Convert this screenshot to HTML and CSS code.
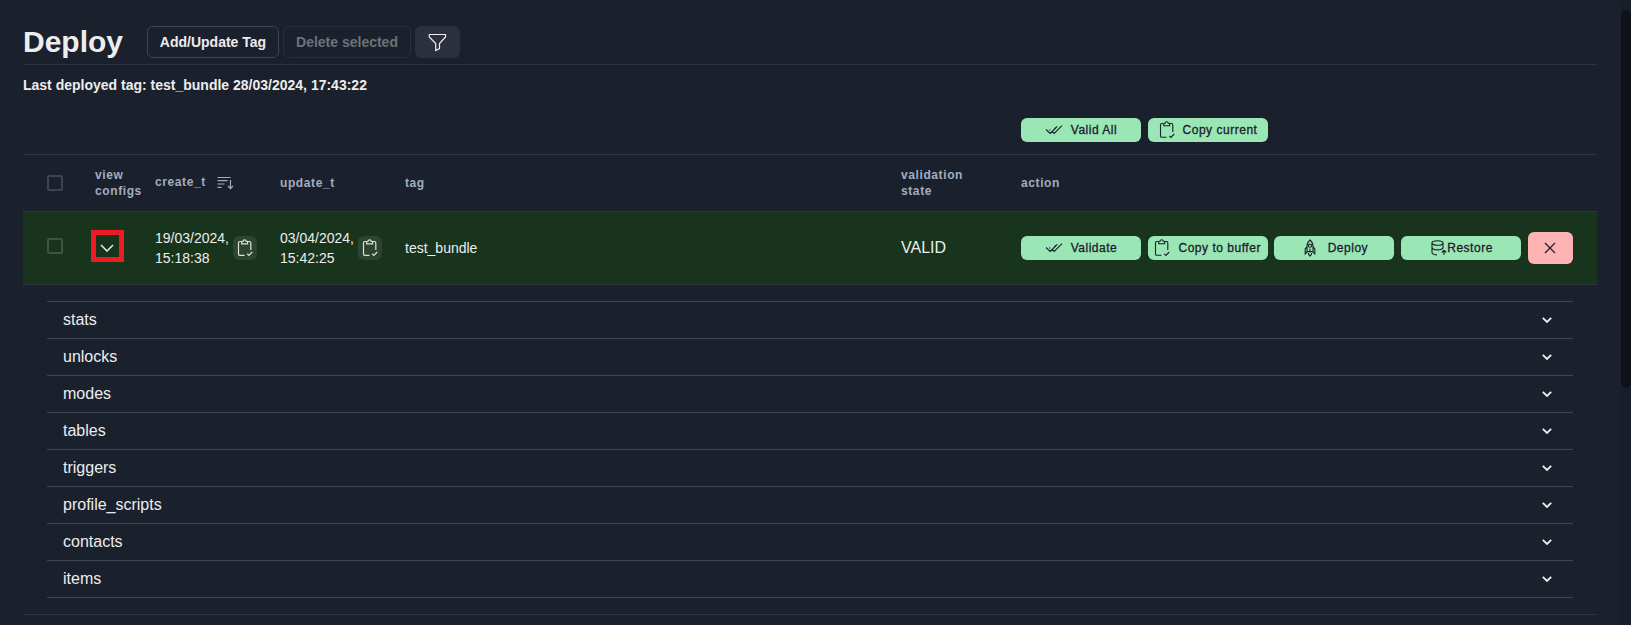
FILE: index.html
```
<!DOCTYPE html>
<html lang="en">
<head>
<meta charset="utf-8">
<title>Deploy</title>
<link rel="stylesheet" href="styles.css">
</head>
<body>
<svg class="defs" aria-hidden="true">
  <symbol id="clip" viewBox="0 0 16 18"><path d="M4 2.5H2.8Q1.5 2.5 1.5 3.8V15Q1.5 16.3 2.8 16.3H7.5M11 2.5h1.5Q13.8 2.5 13.8 3.8V11M4.7 4.8V2.8Q4.7 2.3 5.3 2.3H6Q6.2.8 7.6.8T9.3 2.3H10Q10.6 2.3 10.6 2.8V4.8ZM10.2 14.8l1.7 1.6 3.3-3.4"/></symbol>
  <symbol id="checks" viewBox="0 0 18 12"><path d="M1 5.5l4.2 4L8 6.8M4.5 5.5l.8.8M9.2 5l1.6-1.6M7.2 7.3l2 2.2L17 1.7M5.2 9.5L12.3 2.3"/></symbol>
  <symbol id="down" viewBox="0 0 14 8"><path d="M1 1l6 6 6-6"/></symbol>
</svg>
<div class="app">
  <main class="page">
    <header class="head">
      <h1 class="title">Deploy</h1>
      <button class="btn add">Add/Update Tag</button>
      <button class="btn del" disabled>Delete selected</button>
      <button class="btn filter"><svg width="19" height="19" viewBox="0 0 19 19"><path d="M1.3 1.5h16.2v2.4l-6 6.6v5.1l-3.8 2V10.5l-6.4-6.6z"/></svg></button>
    </header>
    <p class="last">Last deployed tag: test_bundle 28/03/2024, 17:43:22</p>
    <div class="bulk">
      <button class="act"><svg class="ck" width="18" height="12"><use href="#checks"/></svg><span class="gap">Valid All</span></button>
      <button class="act"><svg class="cl" width="16" height="18"><use href="#clip"/></svg><span class="gap">Copy current</span></button>
    </div>
    <section class="table">
      <div class="row thead">
        <div class="c-check"><span class="box"></span></div>
        <div class="c-view">view configs</div>
        <div class="c-date sorted"><span class="label">create_t</span><svg width="17" height="14" viewBox="0 0 17 14"><path d="M.5 1.5h13M.5 4.7h10M.5 8h7M.5 11.3h4M13.5 4v8.5M11 10l2.5 2.7 2.5-2.7"/></svg></div>
        <div class="c-date">update_t</div>
        <div class="c-tag">tag</div>
        <div class="c-state">validation<br>state</div>
        <div class="c-act">action</div>
      </div>
      <div class="row valid">
        <div class="c-check"><span class="box"></span></div>
        <div class="c-view"><span class="mark"><svg width="14" height="8"><use href="#down"/></svg></span></div>
        <div class="c-date"><span class="date">19/03/2024, 15:18:38</span><button class="copy"><svg width="16" height="18"><use href="#clip"/></svg></button></div>
        <div class="c-date"><span class="date">03/04/2024, 15:42:25</span><button class="copy"><svg width="16" height="18"><use href="#clip"/></svg></button></div>
        <div class="c-tag">test_bundle</div>
        <div class="c-state">VALID</div>
        <div class="c-act">
          <button class="act"><svg class="ck" width="18" height="12"><use href="#checks"/></svg><span class="gap">Validate</span></button>
          <button class="act"><svg class="cl" width="16" height="18"><use href="#clip"/></svg><span class="gap">Copy to buffer</span></button>
          <button class="act launch"><svg class="rk" width="12" height="18" viewBox="0 0 12 18"><path d="M6 1Q3 3.4 3 7.2V12.5H9V7.2Q9 3.4 6 1zM3 7.5L1.2 10V14.8L3.4 12.5M9 7.5l1.8 2.5v4.8L8.6 12.5M4.3 13.8Q4.3 15.6 6 17 7.7 15.6 7.7 13.8M6 9.5v4"/><circle cx="6" cy="6.7" r="1.6"/></svg><span class="gap wide">Deploy</span></button>
          <button class="act restore"><svg width="16" height="16" viewBox="0 0 16 16"><ellipse cx="6.5" cy="3" rx="5.5" ry="2.3"/><path d="M1 3v9.5Q1.2 14.6 6 14.9M12 3v5.2M1 7.7q.5 2.2 5.5 2.2T12 7.7M13 15V10.5M10.8 12.5L13 10.3l2.2 2.2"/></svg><span>Restore</span></button>
          <button class="remove"><svg width="12" height="12" viewBox="0 0 12 12"><path d="M1 1l10 10M11 1L1 11"/></svg></button>
        </div>
      </div>
      <div class="details">
        <div class="item"><span>stats</span><svg width="10" height="6" viewBox="0 0 10 6"><path d="M.8.8L5 5 9.2.8"/></svg></div>
        <div class="item"><span>unlocks</span><svg width="10" height="6" viewBox="0 0 10 6"><path d="M.8.8L5 5 9.2.8"/></svg></div>
        <div class="item"><span>modes</span><svg width="10" height="6" viewBox="0 0 10 6"><path d="M.8.8L5 5 9.2.8"/></svg></div>
        <div class="item"><span>tables</span><svg width="10" height="6" viewBox="0 0 10 6"><path d="M.8.8L5 5 9.2.8"/></svg></div>
        <div class="item"><span>triggers</span><svg width="10" height="6" viewBox="0 0 10 6"><path d="M.8.8L5 5 9.2.8"/></svg></div>
        <div class="item"><span>profile_scripts</span><svg width="10" height="6" viewBox="0 0 10 6"><path d="M.8.8L5 5 9.2.8"/></svg></div>
        <div class="item"><span>contacts</span><svg width="10" height="6" viewBox="0 0 10 6"><path d="M.8.8L5 5 9.2.8"/></svg></div>
        <div class="item"><span>items</span><svg width="10" height="6" viewBox="0 0 10 6"><path d="M.8.8L5 5 9.2.8"/></svg></div>
      </div>
    </section>
  </main>
  <div class="track"><div class="thumb"></div></div>
</div>
</body>
</html>
```
FILE: styles.css
```
* { box-sizing: border-box; }
body { margin: 0; background: #1a202c; color: #ededee; font: 16px/24px "Liberation Sans", Arial, sans-serif; overflow: hidden; }
button { font-family: inherit; border: 0; padding: 0; margin: 0; color: inherit; display: flex; align-items: center; justify-content: center; flex: none; }
svg { fill: none; stroke: currentColor; stroke-width: 1.2; flex: none; display: block; }
.defs { position: absolute; width: 0; height: 0; }
.app { display: flex; height: 625px; }
.page { flex: 1; padding: 18px 24px 0 23px; }
.head { display: flex; align-items: center; height: 47px; padding-top: 2px; border-bottom: 1px solid #2d3340; }
.title { width: 124px; margin: 0; padding-bottom: 1px; font-size: 30px; line-height: 36px; font-weight: 700; }
.btn { height: 32px; border-radius: 6px; font-size: 14px; font-weight: 700; border: 1px solid #3f444e; background: transparent; white-space: nowrap; }
.add { width: 132px; }
.del { width: 128px; margin-left: 4px; color: #6e7178; border-color: #292f3a; }
.filter { width: 45px; margin-left: 4px; border: 0; background: #2c303c; }
.last { margin: 0; padding-top: 10px; font-size: 14px; line-height: 21px; font-weight: 700; }
.bulk { display: flex; gap: 7px; padding: 22px 0 12px 998px; }
.act { width: 120px; height: 24px; border-radius: 6px; background: #9ae6b4; color: #1a202c; font-size: 12px; line-height: 24px; font-weight: 400; -webkit-text-stroke: .3px #1a202c; white-space: nowrap; letter-spacing: .52px; }
.act svg { stroke-width: 1.1; }
.gap { margin-left: 8px; }
.wide { margin-left: 12px; }
.launch { padding-left: 3px; }
.restore { padding-left: 2px; }
.row { display: grid; grid-template-columns: 72px 60px 125px 125px 496px 120px 1fr; align-items: center; border-top: 1px solid #2d3748; }
.thead { height: 57px; color: #a0aec0; font-size: 12px; line-height: 16px; font-weight: 700; letter-spacing: .6px; }
.valid { height: 73px; background: #18341c; font-size: 14px; line-height: 20px; }
.box { display: block; width: 16px; height: 16px; margin-left: 24px; border: 2px solid #3f444e; border-radius: 2px; }
.valid .box { border-color: #3d543f; margin-top: -4px; }
.thead .c-view { width: 52px; }
.mark { display: flex; align-items: center; justify-content: center; width: 33px; height: 32px; margin: -4px 0 0 -4px; border: 5px solid #ed1c24; padding: 4px 1px 0 0; }
.mark svg { stroke-width: 1.5; }
.sorted { display: flex; gap: 11px; align-items: center; }
.label { padding-bottom: 2px; }
.c-date { display: flex; align-items: center; }
.date { width: 78px; }
.copy { width: 24px; height: 24px; border-radius: 6px; background: #2c4430; color: #dce1dd; }
.valid .c-state { font-size: 16px; }
.valid .c-act { display: flex; align-items: center; gap: 6.7px; }
.remove { width: 45px; height: 32px; border-radius: 6px; background: #feb2b2; color: #1a202c; }
.details { border-top: 1px solid #2d3748; border-bottom: 1px solid #2d3748; padding: 16px 24px; }
.item { display: flex; align-items: center; justify-content: space-between; height: 37px; padding: 0 21px 0 16px; border-top: 1px solid #3f444e; }
.item:last-child { height: 38px; border-bottom: 1px solid #3f444e; }
.item svg { stroke-width: 1.8; }
.track { width: 10px; padding-top: 10px; background: #181e29; }
.thumb { width: 10px; height: 378px; background: #0e1118; border-radius: 5px; }
```
